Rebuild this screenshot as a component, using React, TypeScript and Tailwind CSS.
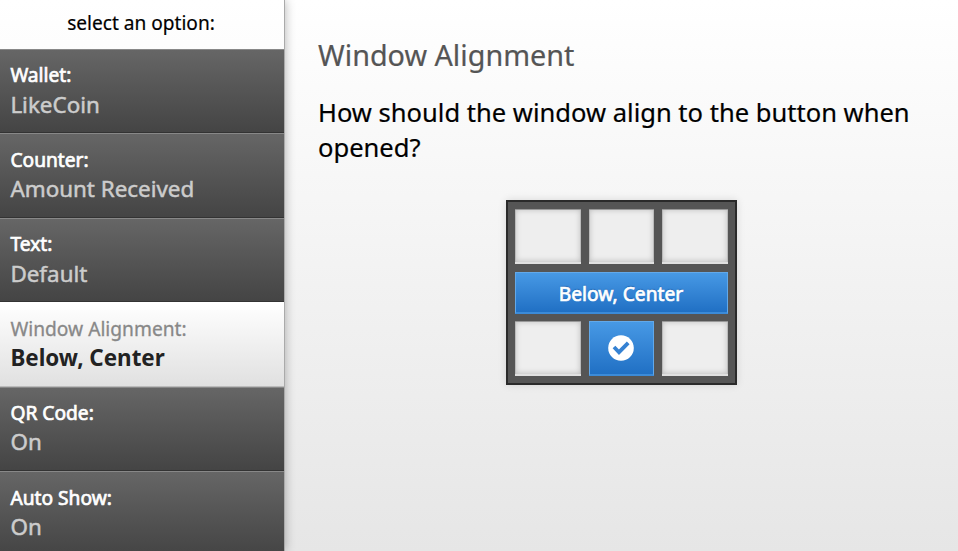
const options = [
  { label: 'Wallet:', value: 'LikeCoin' },
  { label: 'Counter:', value: 'Amount Received' },
  { label: 'Text:', value: 'Default' },
  { label: 'Window Alignment:', value: 'Below, Center', active: true },
  { label: 'QR Code:', value: 'On' },
  { label: 'Auto Show:', value: 'On' },
];

function Cell() {
  return (
    <div className="h-[55px] border-b-2 border-[#e0e0e0] bg-[#eeeeee] shadow-[inset_0_1px_0_#999,inset_1px_0_0_#bbb,inset_-1px_0_0_#bbb,inset_0_0_6px_rgba(0,0,0,0.25)]" />
  );
}

export default function App() {
  return (
    <div className="flex h-[551px] w-[958px] overflow-hidden bg-linear-to-b from-white to-[#e6e6e6] font-['Noto_Sans',sans-serif] text-black">
      <aside className="z-10 w-[285px] shrink-0 border-r border-[#aaa] bg-linear-to-b from-white to-[#e6e6e6] shadow-[0_0_10px_rgba(0,0,0,0.3)]">
        <div className="h-[49px] pt-[9px] text-center text-[19.1px] leading-[28px] [-webkit-text-stroke:0.2px_currentColor]">
          <span className="-ml-[2px]">select an option:</span>
        </div>
        {options.map((o) => (
          <div
            key={o.label}
            className={
              'h-[84.45px] border-t pl-[10.4px] pt-[11.4px] ' +
              (o.active
                ? 'border-white bg-linear-to-b from-white to-[#e0e0e0] shadow-[inset_0_-1px_0_#bbb]'
                : 'border-[#888] bg-linear-to-b from-[#666] to-[#444] shadow-[inset_0_-1px_0_#333]')
            }
          >
            <div
              className={
                'text-[19.2px] leading-[28px] ' +
                (o.active
                  ? 'text-[#888] [-webkit-text-stroke:0.3px_currentColor]'
                  : 'text-white [-webkit-text-stroke:0.7px_currentColor]')
              }
            >
              {o.label}
            </div>
            <div
              className={
                'mt-[0.25px] text-[22.4px] leading-[30px] ' +
                (o.active
                  ? 'font-bold text-[#222]'
                  : 'text-[#ccc] [-webkit-text-stroke:0.5px_currentColor]')
              }
            >
              {o.value}
            </div>
          </div>
        ))}
      </aside>
      <main className="flex-1 pl-[33px] pt-[35px]">
        <h1 className="text-[28.75px] leading-[40px] text-[#555] [-webkit-text-stroke:0.2px_currentColor]">Window Alignment</h1>
        <p className="mt-[20px] w-[607px] text-[25.55px] leading-[35px] [-webkit-text-stroke:0.2px_currentColor]">
          How should the window align to the button when opened?
        </p>
        <div className="mt-[35px] ml-[188px] grid w-[231px] grid-cols-3 gap-x-[8px] gap-y-[7px] border-2 border-[#2a2a2a] bg-[#555] px-[7px] pt-[7px] pb-[7px] shadow-[0_0_8px_rgba(0,0,0,0.12)]">
          <Cell />
          <Cell />
          <Cell />
          <div className="col-span-3 mt-px h-[42px] border border-b-2 border-[#62a9ea] border-b-[#3c8bd8] bg-linear-to-b from-[#4799e5] to-[#2070c4] text-center text-[19.2px] leading-[42px] text-white [-webkit-text-stroke:0.7px_currentColor] [text-shadow:0_-1px_1px_#1a62b0]">
            <span className="-ml-[1px]">Below, Center</span>
          </div>
          <Cell />
          <div className="flex h-[55px] items-center justify-center border border-b-2 border-[#62a9ea] border-b-[#3c8bd8] bg-linear-to-b from-[#4799e5] to-[#2070c4] pr-px">
            <svg width="26" height="26" viewBox="0 0 26 26">
              <circle cx="13" cy="13" r="12.8" fill="#fff" />
              <path d="M6 12l5 5.2 9.2-9.4" fill="none" stroke="#3582d3" strokeWidth="3.8" />
            </svg>
          </div>
          <Cell />
        </div>
      </main>
    </div>
  );
}
